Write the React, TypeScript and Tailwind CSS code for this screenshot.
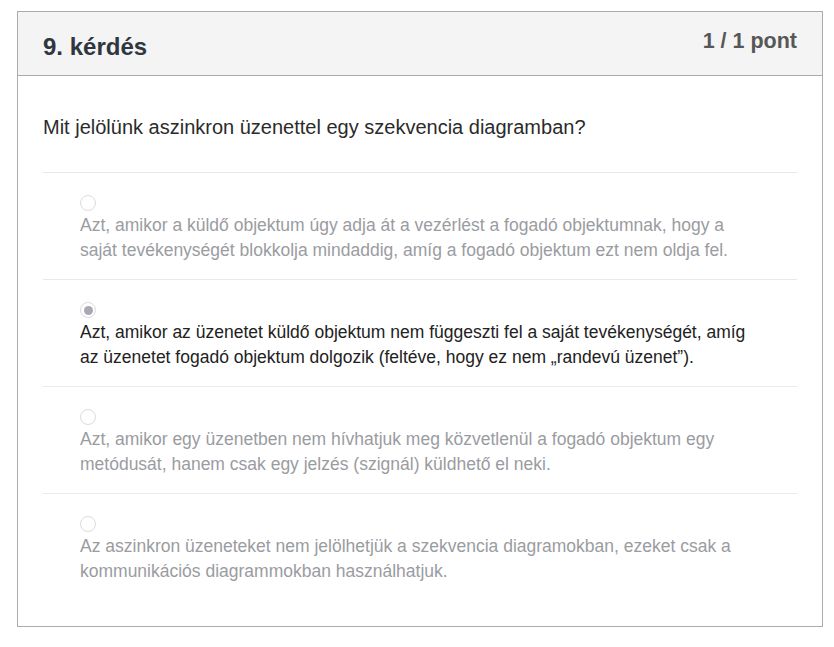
const options = [
  {
    text: "Azt, amikor a küldő objektum úgy adja át a vezérlést a fogadó objektumnak, hogy a saját tevékenységét blokkolja mindaddig, amíg a fogadó objektum ezt nem oldja fel.",
    checked: false,
  },
  {
    text: "Azt, amikor az üzenetet küldő objektum nem függeszti fel a saját tevékenységét, amíg az üzenetet fogadó objektum dolgozik (feltéve, hogy ez nem „randevú üzenet”).",
    checked: true,
  },
  {
    text: "Azt, amikor egy üzenetben nem hívhatjuk meg közvetlenül a fogadó objektum egy metódusát, hanem csak egy jelzés (szignál) küldhető el neki.",
    checked: false,
  },
  {
    text: "Az aszinkron üzeneteket nem jelölhetjük a szekvencia diagramokban, ezeket csak a kommunikációs diagrammokban használhatjuk.",
    checked: false,
  },
]

const Radio = ({ checked }: { checked: boolean }) => (
  <div className="w-4 h-4 rounded-full border-[1.5px] border-[#dcdce0] flex items-center justify-center bg-white">
    {checked && <div className="w-[9px] h-[9px] rounded-full bg-[#a9a9b4]" />}
  </div>
)

export default function App() {
  return (
    <div className="min-h-screen bg-white pt-[11px] pl-[17px] font-['Liberation_Sans',Arial,sans-serif]">
      <div className="w-[806px] border border-[#ababab]">
        <div className="h-[64px] bg-[#f4f4f4] border-b border-[#ababab] flex justify-between px-[25px]">
          <h2 className="mt-[20px] text-[24px] leading-[30px] font-bold text-[#2f3640]">9. kérdés</h2>
          <div className="mt-[15px] text-[21.5px] leading-[28px] font-bold text-[#575757]">1 / 1 pont</div>
        </div>
        <div className="px-[25px] pb-[26px]">
          <p className="pt-[37px] pb-[31px] text-[20px] leading-[28px] text-[#2b2b2b]">
            Mit jelölünk aszinkron üzenettel egy szekvencia diagramban?
          </p>
          {options.map((o, i) => (
            <div key={i} className="border-t border-[#e9e9e9] pt-[22px] pb-[16px] pl-[37px] pr-[37px]">
              <Radio checked={o.checked} />
              <div
                className={
                  "mt-[2px] text-[17.5px] leading-[25px] " +
                  (o.checked ? "text-[#222222]" : "text-[#9a9ca1]")
                }
              >
                {o.text}
              </div>
            </div>
          ))}
        </div>
      </div>
    </div>
  )
}
